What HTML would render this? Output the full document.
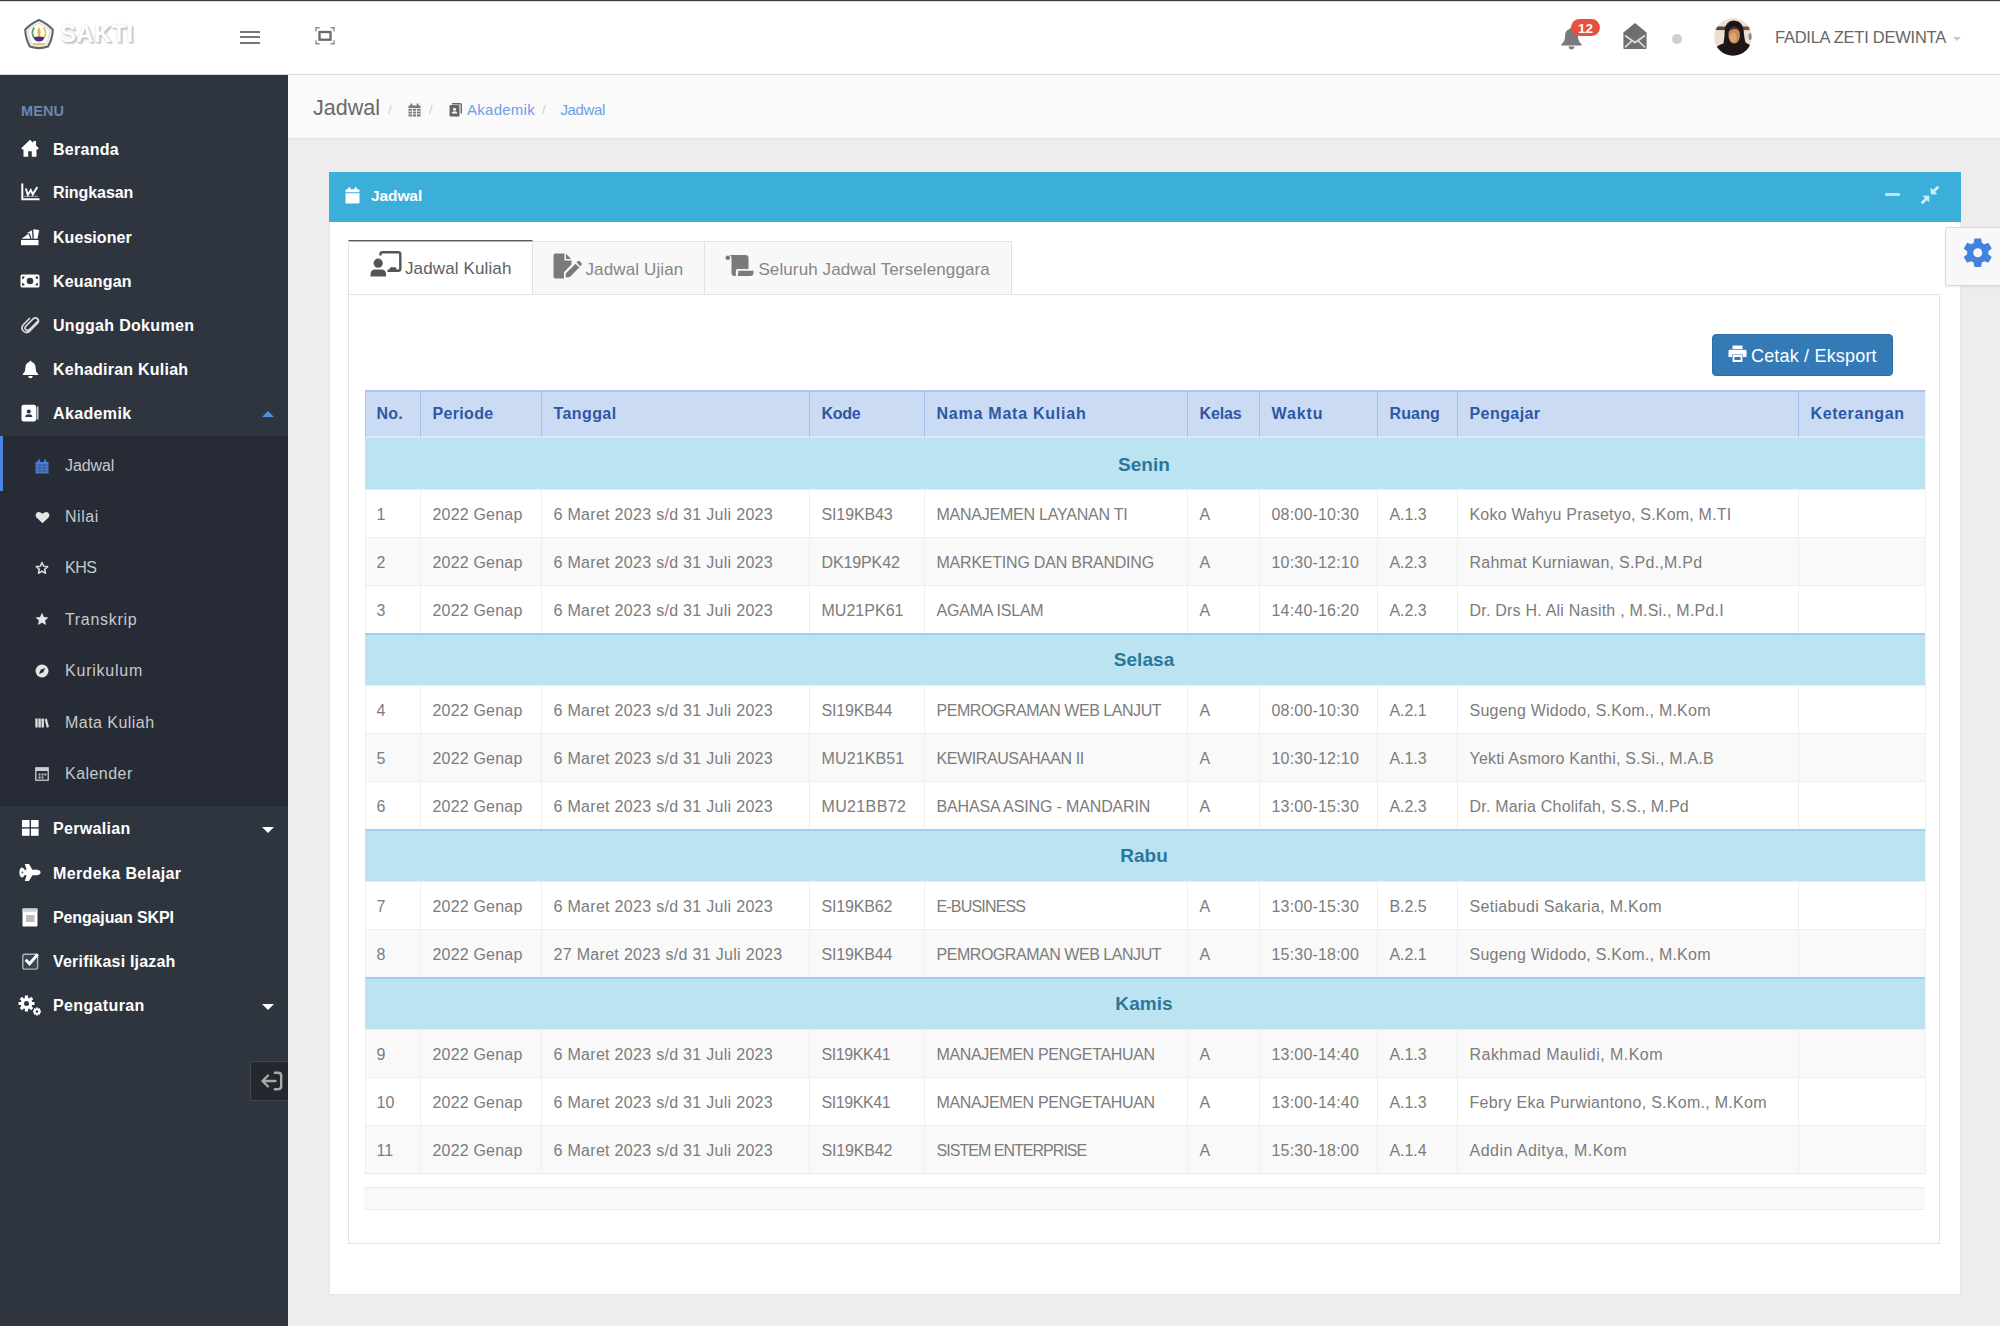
<!DOCTYPE html>
<html lang="id">
<head>
<meta charset="utf-8">
<title>Jadwal</title>
<style>
*{box-sizing:border-box;margin:0;padding:0}
html,body{width:2000px;height:1326px;overflow:hidden}
body{font-family:"Liberation Sans",sans-serif;background:#ededed;color:#777;position:relative}
.abs{position:absolute}
#topline{left:0;top:0;width:2000px;height:2px;background:#d8d8d8;border-top:1px solid #3e3e3e}
#header{left:0;top:2px;width:2000px;height:73px;background:#fff;border-bottom:1px solid #dcdcdc}
#sidebar{left:0;top:75px;width:288px;height:1251px;background:#2f353f}
#crumb{left:288px;top:75px;width:1712px;height:64px;background:#fafafa;border-bottom:1px solid #e4e4e4}
#panel{left:329px;top:172px;width:1632px;height:1123px;background:#fff;border:1px solid #e6e6e6;border-top:none}
#phead{left:329px;top:172px;width:1632px;height:50px;background:#3bafda}
#tabbox{left:348px;top:294px;width:1592px;height:950px;background:#fff;border:1px solid #e3e3e3}
.nowrap{white-space:nowrap}
/* sidebar */
.mi{margin-top:1px;position:absolute;left:53px;color:#fff;font-weight:bold;font-size:16px;white-space:nowrap;line-height:20px;letter-spacing:.1px}
.si{margin-top:1px;position:absolute;left:65px;color:#c8c9cc;font-size:16px;white-space:nowrap;line-height:20px;letter-spacing:.2px}
#submenu{left:0;top:436px;width:288px;height:370px;background:#272b35}
/* tabs */
.tab{position:absolute;top:241px;height:54px;background:#f8f8f8;border:1px solid #e3e3e3;font-size:17px;color:#777;white-space:nowrap}
/* table */
table{border-collapse:separate;border-spacing:0;table-layout:fixed;position:absolute;left:365px;top:390px;width:1560px;font-size:16px;color:#7c7c7c;border-right:1px solid #efefef;border-bottom:1px solid #e9e9e9}
td,th{border:0;border-left:1px solid #efefef;border-top:1px solid #eeeeee;padding:3px 0 0 11.5px;text-align:left;white-space:nowrap;overflow:hidden;vertical-align:middle;line-height:20px}
th{background:#cadbf3;color:#2c58a5;font-weight:bold;font-size:16px;height:48px;border-left:1px solid #a4c1ee;border-top:2px solid #a9c5ef;border-bottom:2px solid #dde7f5;padding-top:0}
tr.g td{background:#bce3f2;color:#2a7899;font-weight:bold;font-size:19px;text-align:center;padding:0 3px 0 0;border-left:1px solid #bce3f2;border-top:2px solid #9fd1ee;letter-spacing:.05px}
tr.r td{height:48px}
tr.g1 td{border-top-color:#bce3f2}
tr.r47 td{height:47px}
tr.o td{background:#fff}
tr.e td{background:#f9f9f9}
/*COLCSS*/
.h0{letter-spacing:0.24px}
.h1{letter-spacing:0.33px}
.h2{letter-spacing:0.41px}
.h3{letter-spacing:-0.25px}
.h4{letter-spacing:0.76px}
.h5{letter-spacing:-0.14px}
.h6{letter-spacing:0.92px}
.h7{letter-spacing:0.14px}
.h8{letter-spacing:0.43px}
.h9{letter-spacing:0.60px}
.c0{letter-spacing:0.10px}
.c1{letter-spacing:0.19px}
.c2{letter-spacing:0.30px}
.c3{letter-spacing:-0.13px}
.c4{letter-spacing:-0.22px}
.c5{letter-spacing:-0.17px}
.c6{letter-spacing:0.19px}
.c7{letter-spacing:-0.07px}
.c8{letter-spacing:0.22px}
/*ENDCOLCSS*/
.h0,.c0{padding-left:10.5px}
</style>
</head>
<body>
<div id="topline" class="abs"></div>
<div id="header" class="abs"></div>
<div id="sidebar" class="abs"></div>
<div id="crumb" class="abs"></div>
<div id="panel" class="abs"></div>
<div id="phead" class="abs"></div>
<div id="tabbox" class="abs"></div>
<!--HEADER-CONTENT-->
<svg class="abs" style="left:23px;top:18px" width="32" height="32" viewBox="0 0 32 32">
<path d="M16 2 Q23.800 5.300 29.800 11.600 Q29.600 20.800 25 28.600 Q16 31.600 7 28.600 Q2.400 20.800 2.200 11.600 Q8.200 5.300 16 2Z" fill="#f3f3f3" stroke="#666" stroke-width="2.100" stroke-linejoin="round"/><path d="M16 5 Q22 7.800 26.800 12.600 Q26.500 20 23 26.200 Q16 28.400 9 26.200 Q5.500 20 5.200 12.600 Q10 7.800 16 5Z" fill="#fff" stroke="#d0d0d0" stroke-width="0.800"/>
<path d="M11.2 9.5 Q7.6 14.5 11.2 20" fill="none" stroke="#5aa36a" stroke-width="1.8"/>
<path d="M20.8 9.5 Q24.4 14.5 20.8 20" fill="none" stroke="#d9c25a" stroke-width="1.6"/>
<path d="M16 8.5 Q19.2 14.5 16 20.5 Q12.8 14.5 16 8.5Z" fill="#f0b92c"/>
<path d="M10.6 19.2 Q16 17.6 21.4 19.2 Q20.6 23.4 16 23.4 Q11.4 23.4 10.6 19.2Z" fill="#4a2d86"/>
<path d="M9.6 25.2 L22.4 25.2 L21.6 26.8 L10.4 26.8Z" fill="#e3b93a"/>
</svg>
<div class="abs nowrap" id="brand" style="left:60px;top:19px;font-size:24px;line-height:30px;font-weight:bold;color:#fff;letter-spacing:.3px;text-shadow:1px 1px 1px #bdbdbd,2px 2px 2px #cfcfcf,0 0 2px #d8d8d8">SAKTI</div>
<div class="abs" style="left:240px;top:31px;width:20px;height:2px;background:#757575"></div>
<div class="abs" style="left:240px;top:36px;width:20px;height:2px;background:#757575"></div>
<div class="abs" style="left:240px;top:41.500px;width:20px;height:2px;background:#757575"></div>
<svg class="abs" style="left:315px;top:27px" width="20" height="18" viewBox="0 0 20 18">
<rect x="4.500" y="5" width="11" height="7.700" fill="none" stroke="#6a6a6a" stroke-width="2.300"/>
<path d="M1 4.300V0.800H4.500 M15.500 0.800H19V4.300 M19 13.200V16.800H15.500 M4.500 16.800H1V13.200" fill="none" stroke="#8a8a8a" stroke-width="1.400"/>
</svg>
<svg class="abs" style="left:1560px;top:26px" width="23" height="24" viewBox="0 0 23 24">
<path d="M11.5 1.2 Q12.9 1.2 12.9 2.8 Q18 4 18 10.2 Q18 15.6 21.6 18.2 L21.6 19.4 L1.4 19.4 L1.4 18.2 Q5 15.6 5 10.2 Q5 4 10.1 2.8 Q10.1 1.2 11.5 1.2Z" fill="#7a7a7a"/>
<path d="M8.6 20.6 L14.4 20.6 Q14.2 23.4 11.5 23.4 Q8.8 23.4 8.6 20.6Z" fill="#7a7a7a"/>
</svg>
<div class="abs nowrap" style="left:1571px;top:19px;width:29px;height:17px;border-radius:9px;background:#e9503e;color:#fff;font-weight:bold;font-size:13.500px;line-height:20px;text-align:center;overflow:hidden">12</div>
<svg class="abs" style="left:1622px;top:22px" width="26" height="28" viewBox="0 0 26 28">
<path d="M13 1 L24.6 10.6 L24.6 26 Q24.6 27 23.6 27 L2.4 27 Q1.4 27 1.4 26 L1.4 10.6Z" fill="#6e6e6e"/>
<path d="M3 13.4 L13 20.6 L23 13.4 M3 25.4 L10 18.6 M23 25.4 L16 18.6" fill="none" stroke="#d8d8d8" stroke-width="1.800"/>
</svg>
<div class="abs" style="left:1672px;top:34px;width:10px;height:10px;border-radius:5px;background:#cfcfcf"></div>
<svg class="abs" style="left:1714px;top:18px" width="38" height="38" viewBox="0 0 38 38">
<defs><clipPath id="avc"><circle cx="19" cy="19" r="18.800"/></clipPath><filter id="avb" x="-10%" y="-10%" width="120%" height="120%"><feGaussianBlur stdDeviation="0.700"/></filter></defs>
<g clip-path="url(#avc)"><g filter="url(#avb)">
<rect x="-3" y="-3" width="44" height="44" fill="#ecdfd1"/>
<rect x="0" y="8.500" width="12" height="3.600" fill="#5a4639"/>
<rect x="28" y="8.500" width="7.500" height="3.600" fill="#6a5546"/>
<ellipse cx="36.200" cy="18.500" rx="1.600" ry="3.600" fill="#8a8583"/>
<path d="M19.800 2.500 Q28.600 3 29.600 12 Q30.200 20 31.500 24.500 Q36 26.500 38 29 L38 40 L0 40 L0 31 Q3 27.500 9.500 25.500 Q10.600 20 10.800 12 Q11.500 3 19.800 2.500Z" fill="#1d1513"/>
<ellipse cx="20.200" cy="17.200" rx="5.800" ry="8.400" fill="#c48a5c"/>
<ellipse cx="19.200" cy="19.500" rx="3.400" ry="5" fill="#dba56e"/>
<path d="M14 13.500 Q17 7.500 22.500 8.500 Q26 10 26.200 14 Q24 10.500 20 11 Q16 11.500 14 13.500Z" fill="#3a2418" opacity=".85"/>
</g></g>
</svg>
<div class="abs nowrap" id="uname" style="left:1775px;top:26px;font-size:16.500px;line-height:22px;color:#666;letter-spacing:-.25px">FADILA ZETI DEWINTA</div>
<div class="abs" style="left:1953px;top:37px;width:0;height:0;border-left:4px solid transparent;border-right:4px solid transparent;border-top:4px solid #c8c8c8"></div>

<!--SIDEBAR-CONTENT-->
<div id="submenu" class="abs"></div>
<div class="abs" style="left:0;top:436px;width:3px;height:55px;background:#4a86e0"></div>
<div class="abs nowrap" id="menulbl" style="left:21px;top:101px;font-size:14.500px;font-weight:bold;line-height:20px;color:#6b87af;letter-spacing:.1px">MENU</div>
<div class="mi" id="m0" style="top:139px;letter-spacing:0.28px">Beranda</div>
<div class="mi" id="m1" style="top:182px;letter-spacing:-0.07px">Ringkasan</div>
<div class="mi" id="m2" style="top:227px;letter-spacing:0.05px">Kuesioner</div>
<div class="mi" id="m3" style="top:271px;letter-spacing:0.17px">Keuangan</div>
<div class="mi" id="m4" style="top:315px;letter-spacing:0.31px">Unggah Dokumen</div>
<div class="mi" id="m5" style="top:359px;letter-spacing:0.23px">Kehadiran Kuliah</div>
<div class="mi" id="m6" style="top:403px;letter-spacing:0.36px">Akademik</div>
<div class="mi" id="m7" style="top:818px;letter-spacing:0.33px">Perwalian</div>
<div class="mi" id="m8" style="top:863px;letter-spacing:0.38px">Merdeka Belajar</div>
<div class="mi" id="m9" style="top:907px;letter-spacing:-0.13px">Pengajuan SKPI</div>
<div class="mi" id="m10" style="top:951px;letter-spacing:0.20px">Verifikasi Ijazah</div>
<div class="mi" id="m11" style="top:995px;letter-spacing:0.37px">Pengaturan</div>
<div class="si" id="s0" style="top:455px;letter-spacing:-0.09px">Jadwal</div>
<div class="si" id="s1" style="top:506px;letter-spacing:0.53px">Nilai</div>
<div class="si" id="s2" style="top:557px;letter-spacing:-0.54px">KHS</div>
<div class="si" id="s3" style="top:609px;letter-spacing:0.68px">Transkrip</div>
<div class="si" id="s4" style="top:660px;letter-spacing:0.78px">Kurikulum</div>
<div class="si" id="s5" style="top:712px;letter-spacing:0.46px">Mata Kuliah</div>
<div class="si" id="s6" style="top:763px;letter-spacing:0.46px">Kalender</div>
<svg class="abs" style="left:21px;top:139px" width="18" height="19" viewBox="0 0 18 19"><path d="M9 0.800 L12.300 3.900 V2 H15 V6.500 L17.800 9.200 L16.600 10.500 H15.500 V17.800 H10.800 V12.300 H7.200 V17.800 H2.500 V10.500 H1.400 L0.200 9.200Z" fill="#fff"/></svg>
<svg class="abs" style="left:21px;top:183px" width="19" height="18" viewBox="0 0 19 18"><path d="M1.300 0.500V16.300H18.500" fill="none" stroke="#fff" stroke-width="2"/><path d="M4.800 5.500 L6.800 12 L9.800 7 L11.800 11.500 L16.300 4" fill="none" stroke="#fff" stroke-width="1.900"/><path d="M3 13.300H17" stroke="#fff" stroke-width="1" opacity=".55"/></svg>
<svg class="abs" style="left:20px;top:228px" width="20" height="18" viewBox="0 0 20 18"><path d="M1 12H18.500V17.200H1Z" fill="#fff"/><path d="M1.500 10.800 L8.500 5.800 L10.300 10.800Z M6.500 5.200 L12 2.200 L12.500 10.800 L11.500 10.800 L9.800 5.200Z M13.300 1.200 L19.200 2 L17.500 10.800 L13.800 10.800Z" fill="#fff"/></svg>
<svg class="abs" style="left:20px;top:274px" width="20" height="14" viewBox="0 0 20 14"><rect x="0.500" y="0.500" width="19" height="13" rx="1.500" fill="#fff"/><circle cx="10" cy="7" r="3.300" fill="#2f353f"/><path d="M2 2.500 h2.500 a2.500 2.500 0 0 1 -2.500 2.500Z M18 2.500 h-2.500 a2.500 2.500 0 0 0 2.500 2.500Z M2 11.500 h2.500 a2.500 2.500 0 0 0 -2.500 -2.500Z M18 11.500 h-2.500 a2.500 2.500 0 0 1 2.500 -2.500Z" fill="#2f353f"/></svg>
<svg class="abs" style="left:20px;top:316px" width="20" height="18" viewBox="0 0 20 18"><path d="M17.500 5.500 L9.500 13.500 Q7.500 15.300 5.800 13.600 Q4.200 11.800 6 10 L13 3 Q15.500 0.800 17.600 2.900 Q19.600 5.200 17.300 7.500 L9.800 15 Q6.300 18 3.300 15 Q0.500 11.800 3.500 8.500 L9.500 2.500" fill="none" stroke="#dcdcdc" stroke-width="1.700" stroke-linecap="round"/></svg>
<svg class="abs" style="left:22px;top:360px" width="17" height="19" viewBox="0 0 17 19"><path d="M8.500 0.800 Q9.600 0.800 9.600 2 Q13.600 3 13.600 8 Q13.600 12 16.200 14 V15 H0.800 V14 Q3.400 12 3.400 8 Q3.400 3 7.400 2 Q7.400 0.800 8.500 0.800Z" fill="#fff"/><path d="M6.200 16 H10.800 Q10.600 18.300 8.500 18.300 Q6.400 18.300 6.200 16Z" fill="#fff"/></svg>
<svg class="abs" style="left:21px;top:404px" width="18" height="18" viewBox="0 0 18 18"><rect x="0.500" y="0.800" width="14.500" height="16.600" rx="2" fill="#fff"/><path d="M15.500 2.500H17.500V15.500H15.500Z" fill="#c4c7cc"/><circle cx="7.800" cy="7.600" r="2" fill="#2f353f"/><path d="M4.200 13Q4.200 10.300 7.800 10.300Q11.400 10.300 11.400 13Z" fill="#2f353f"/></svg>
<div class="abs" style="left:262px;top:411px;width:0;height:0;border-left:6px solid transparent;border-right:6px solid transparent;border-bottom:6px solid #4a90e2"></div>
<svg class="abs" style="left:35px;top:459px" width="14" height="15" viewBox="0 0 14 15"><path d="M0.500 3 H13.500 V14.500 H0.500Z" fill="#4a7fd6"/><rect x="2.800" y="0.500" width="2" height="3.500" fill="#4a7fd6"/><rect x="9.200" y="0.500" width="2" height="3.500" fill="#4a7fd6"/><path d="M0.500 6 H13.500 M0.500 9 H13.500 M0.500 12 H13.500 M4.800 6 V14.500 M9.200 6 V14.500" stroke="#272b35" stroke-width="0.800" opacity=".55"/></svg>
<svg class="abs" style="left:35px;top:511px" width="15" height="13" viewBox="0 0 15 13"><path d="M7.500 12.300 L1.500 6.500 Q-0.300 4 1.700 1.800 Q4.200 -0.200 7.500 2.800 Q10.800 -0.200 13.300 1.800 Q15.300 4 13.500 6.500Z" fill="#e4e4e4"/></svg>
<svg class="abs" style="left:35px;top:561px" width="14" height="14" viewBox="0 0 15 15"><path d="M7.500 1.600 L9.300 5.600 L13.600 6 L10.400 8.900 L11.300 13.100 L7.500 10.900 L3.700 13.100 L4.600 8.900 L1.400 6 L5.700 5.600Z" fill="none" stroke="#d8d8d8" stroke-width="1.700" stroke-linejoin="round"/></svg>
<svg class="abs" style="left:35px;top:612px" width="14" height="14" viewBox="0 0 15 15"><path d="M7.500 0.800 L9.600 5.300 L14.500 5.800 L10.800 9.100 L11.900 14 L7.500 11.500 L3.100 14 L4.200 9.100 L0.500 5.800 L5.400 5.300Z" fill="#e4e4e4"/></svg>
<svg class="abs" style="left:35px;top:664px" width="14" height="14" viewBox="0 0 14 14"><circle cx="7" cy="7" r="6.500" fill="#e4e4e4"/><path d="M10 4 L8.300 8.300 L4 10 L5.700 5.700Z" fill="#272b35"/></svg>
<svg class="abs" style="left:35px;top:718px" width="14" height="10" viewBox="0 0 14 10"><rect x="0.300" y="0.500" width="2.400" height="9" fill="#dcdcdc"/><rect x="3.400" y="0.500" width="2.400" height="9" fill="#dcdcdc"/><rect x="6.500" y="0.500" width="2.400" height="9" fill="#dcdcdc"/><path d="M9.600 1.300 L11.800 0.600 L14 9 L11.800 9.700Z" fill="#dcdcdc"/></svg>
<svg class="abs" style="left:35px;top:767px" width="14" height="14" viewBox="0 0 14 14"><rect x="0.800" y="0.800" width="12.400" height="12.400" fill="none" stroke="#cfcfcf" stroke-width="1.300"/><rect x="0.800" y="0.800" width="12.400" height="3.200" fill="#cfcfcf"/><path d="M3.500 6.500h2v2h-2z M6.500 6.500h2v2h-2z M9.300 6.500h2v2h-2z M3.500 9.500h2v2h-2z M6.500 9.500h2v2h-2z" fill="#bdbdbd"/></svg>
<svg class="abs" style="left:22px;top:820px" width="17" height="16" viewBox="0 0 17 16"><rect x="0" y="0" width="7.600" height="7.200" fill="#fff"/><rect x="9" y="0" width="7.600" height="7.200" fill="#fff"/><rect x="0" y="8.600" width="7.600" height="7.200" fill="#fff"/><rect x="9" y="8.600" width="7.600" height="7.200" fill="#fff"/></svg>
<svg class="abs" style="left:19px;top:863px" width="22" height="19" viewBox="0 0 22 19"><path d="M5.800 0.900H10L13.400 6.800H18Q21.600 7.300 21.600 9.500Q21.600 11.700 18 12.200H13.400L10 18.100H5.800L7.600 12.200H5.400Q4.600 14.400 2.700 14.400Q0.400 13.600 0.400 9.500Q0.400 5.400 2.700 4.600Q4.600 4.600 5.400 6.800H7.600Z" fill="#fff"/><circle cx="3.400" cy="9.500" r="1.100" fill="#6a707a"/></svg>
<svg class="abs" style="left:22px;top:908px" width="16" height="19" viewBox="0 0 16 19"><rect x="0.500" y="0.500" width="15" height="18" rx="1" fill="#fff"/><rect x="0.500" y="0.500" width="15" height="3.300" fill="#cfd2d6"/><rect x="4" y="7" width="8.500" height="7" fill="#b9bcc2"/></svg>
<svg class="abs" style="left:22px;top:952px" width="18" height="18" viewBox="0 0 18 18"><rect x="0.800" y="2.300" width="14.800" height="14.800" rx="1.500" fill="#3d434e" stroke="#aeb3ba" stroke-width="1.400"/><path d="M3.800 7.800 L7.500 11.800 L15.800 2.200" fill="none" stroke="#fff" stroke-width="2.900"/></svg>
<svg class="abs" style="left:18px;top:995px" width="24" height="21" viewBox="0 0 24 21"><g fill="#fff"><circle cx="8.500" cy="8.500" r="5.800"/><g stroke="#fff" stroke-width="3.200"><path d="M8.500 0.500V16.500M0.500 8.500H16.500M2.800 2.800L14.200 14.200M14.200 2.800L2.800 14.200"/></g><circle cx="19" cy="16.500" r="3"/><g stroke="#fff" stroke-width="1.800"><path d="M19 12.500V20.500M15 16.500H23M16.200 13.700L21.800 19.300M21.800 13.700L16.200 19.300"/></g></g><circle cx="8.500" cy="8.500" r="2.500" fill="#2f353f"/><circle cx="19" cy="16.500" r="1.200" fill="#2f353f"/></svg>
<div class="abs" style="left:262px;top:827px;width:0;height:0;border-left:6px solid transparent;border-right:6px solid transparent;border-top:6px solid #fff"></div>
<div class="abs" style="left:262px;top:1004px;width:0;height:0;border-left:6px solid transparent;border-right:6px solid transparent;border-top:6px solid #fff"></div>
<div class="abs" style="left:250px;top:1061px;width:38px;height:40px;background:#25272e;border:1px solid #42464d;border-right:none;border-radius:2px 0 0 2px"></div>
<svg class="abs" style="left:260px;top:1070px" width="23" height="22" viewBox="0 0 23 22"><g fill="none" stroke="#a9a9a9" stroke-width="2.400" stroke-linecap="round" stroke-linejoin="round"><path d="M14.800 2.800H18Q21.200 2.800 21.200 6V16Q21.200 19.200 18 19.200H14.800"/><path d="M15.500 11H3M8 5.500L2.500 11L8 16.500"/></g></svg>
<!--CRUMB-CONTENT-->
<div class="abs nowrap" id="ptitle" style="left:313px;top:94px;font-size:21.500px;line-height:28px;color:#696969;letter-spacing:0">Jadwal</div>
<div class="abs nowrap" style="left:388px;top:101px;font-size:13px;line-height:18px;color:#cdcdcd">/</div>
<svg class="abs" style="left:408px;top:103px" width="13" height="14" viewBox="0 0 13 14"><path d="M0.500 2.500H12.500V13.500H0.500Z" fill="#7a7a7a"/><rect x="2.500" y="0.500" width="1.800" height="3" fill="#7a7a7a"/><rect x="8.700" y="0.500" width="1.800" height="3" fill="#7a7a7a"/><path d="M0.500 5.500H12.500M0.500 8.200H12.500M0.500 10.900H12.500M4.500 5.500V13.500M8.500 5.500V13.500" stroke="#fafafa" stroke-width="0.900"/></svg>
<div class="abs nowrap" style="left:429px;top:101px;font-size:13px;line-height:18px;color:#cdcdcd">/</div>
<svg class="abs" style="left:449px;top:103px" width="13" height="14" viewBox="0 0 13 14"><rect x="0.500" y="2" width="10" height="11.500" rx="1" fill="#666"/><path d="M3 0.800H11.300Q12.300 0.800 12.300 1.800V10.500" fill="none" stroke="#666" stroke-width="1.400"/><circle cx="5.500" cy="6.300" r="1.500" fill="#fafafa"/><path d="M2.800 10.500Q2.800 8.300 5.500 8.300Q8.200 8.300 8.200 10.500Z" fill="#fafafa"/></svg>
<div class="abs nowrap" id="bc1" style="left:467px;top:101px;font-size:15px;line-height:18px;color:#6c9ee9;letter-spacing:.26px">Akademik</div>
<div class="abs nowrap" style="left:542px;top:101px;font-size:13px;line-height:18px;color:#cdcdcd">/</div>
<div class="abs nowrap" id="bc2" style="left:560.400px;top:101px;font-size:15px;line-height:18px;color:#6c9ee9;letter-spacing:-.34px">Jadwal</div>

<!--PANEL-CONTENT-->
<svg class="abs" style="left:345px;top:187px" width="15" height="17" viewBox="0 0 15 17"><path d="M0.500 6.200H14.500V15.200Q14.500 16.500 13.200 16.500H1.800Q0.500 16.500 0.500 15.200Z" fill="#fff"/><path d="M1.800 2.300H13.200Q14.500 2.300 14.500 3.600V5.200H0.500V3.600Q0.500 2.300 1.800 2.300Z" fill="#fff"/><rect x="3.200" y="0.300" width="2.200" height="3.600" rx=".6" fill="#fff"/><rect x="9.600" y="0.300" width="2.200" height="3.600" rx=".6" fill="#fff"/></svg>
<div class="abs nowrap" id="ph" style="left:371px;top:185px;font-size:15.500px;line-height:22px;font-weight:bold;color:#fff;letter-spacing:-.1px">Jadwal</div>
<div class="abs" style="left:1885px;top:193px;width:15px;height:3px;background:#c2e5f4;border-radius:1px"></div>
<svg class="abs" style="left:1920px;top:185px" width="20" height="20" viewBox="0 0 20 20"><g fill="#d4edf7" stroke="#d4edf7"><path d="M18.300 1.700L14 6" stroke-width="2.800" fill="none"/><path d="M11.100 3.300L16.700 8.900H11.100Z" stroke-width="0.800" stroke-linejoin="round"/><path d="M1.700 18.300L6 14" stroke-width="2.800" fill="none"/><path d="M8.900 16.700L3.300 11.100H8.900Z" stroke-width="0.800" stroke-linejoin="round"/></g></svg>
<!-- settings tab -->
<div class="abs" style="left:1945px;top:227px;width:60px;height:59px;background:#f8f8f8;border:1px solid #dadada;border-radius:2px;box-shadow:0 1px 2px rgba(0,0,0,.08)"></div>
<svg class="abs" style="left:1959.700px;top:235px" width="35.500" height="35.500" viewBox="0 0 24 24"><path fill="#4582dd" d="M19.140 12.940c.040-.300.060-.610.060-.940 0-.320-.020-.640-.070-.940l2.030-1.580a.490.490 0 0 0 .120-.610l-1.920-3.320a.488.488 0 0 0-.590-.220l-2.390.960c-.500-.380-1.030-.700-1.620-.940l-.360-2.540a.484.484 0 0 0-.480-.410h-3.840c-.240 0-.430.170-.470.410l-.360 2.540c-.590.240-1.130.570-1.620.940l-2.390-.960c-.220-.080-.470 0-.590.220L2.740 8.870c-.120.210-.080.470.120.610l2.030 1.580c-.050.300-.090.630-.090.940s.020.640.070.940l-2.030 1.580a.490.490 0 0 0-.120.610l1.920 3.320c.120.220.370.290.590.220l2.390-.960c.500.380 1.030.700 1.620.940l.360 2.540c.050.240.240.410.480.410h3.840c.240 0 .440-.170.470-.410l.360-2.540c.590-.240 1.130-.560 1.620-.940l2.390.960c.220.080.470 0 .590-.220l1.920-3.320c.120-.220.070-.470-.120-.610l-2.010-1.580zM12 15.600c-1.980 0-3.600-1.620-3.600-3.600s1.620-3.600 3.600-3.600 3.600 1.620 3.600 3.600-1.620 3.600-3.600 3.600z"/><circle cx="12" cy="12" r="3.600" fill="none" stroke="#4582dd" stroke-width="1.100"/></svg>
<!-- tabs -->
<div class="tab" style="left:348px;width:185px;background:#fff;border-top:1px solid #5c5c5c;top:240px;height:55px;box-shadow:inset 0 1px 0 #b5b5b5"></div>
<div class="tab" style="left:532px;width:173px"></div>
<div class="tab" style="left:704px;width:308px"></div>
<div class="abs nowrap" id="t1" style="left:405px;top:258px;font-size:17px;line-height:22px;color:#5e5e5e;letter-spacing:.12px">Jadwal Kuliah</div>
<div class="abs nowrap" id="t2" style="left:585.500px;top:259px;font-size:17px;line-height:22px;color:#868686;letter-spacing:.12px">Jadwal Ujian</div>
<div class="abs nowrap" id="t3" style="left:758.400px;top:259px;font-size:17px;line-height:22px;color:#868686;letter-spacing:.11px">Seluruh Jadwal Terselenggara</div>
<svg class="abs" style="left:370px;top:251px" width="32" height="26" viewBox="0 0 32 26">
<path d="M10.500 4.500V3.200Q10.500 1.200 12.500 1.200H28.300Q30.300 1.200 30.300 3.200V17.800Q30.300 19.800 28.300 19.800H17.500" fill="none" stroke="#555" stroke-width="2.400"/>
<path d="M19.500 19.800V17.800Q19.500 16.200 21.200 16.200H24.800Q26.500 16.200 26.500 17.800V19.800Z" fill="#555"/>
<circle cx="8.200" cy="12.200" r="4.600" fill="#555"/>
<path d="M0.500 25.500V23.500Q0.500 18.600 5.200 18.600H11.200Q16 18.600 16 23.500V25.500Z" fill="#555"/>
</svg>
<svg class="abs" style="left:553px;top:253px" width="29" height="26" viewBox="0 0 29 26">
<path d="M2.500 0.500H11.500V7.500H18.500V11.500L11 19V25.500H2.500Q0.500 25.500 0.500 23.500V2.500Q0.500 0.500 2.500 0.500Z" fill="#7a7a7a"/>
<path d="M13 0.800L18.200 6H13Z" fill="#7a7a7a"/>
<path d="M13 20.200L22.500 10.700L26.300 14.500L16.800 24L12.600 24.600Z" fill="#7a7a7a"/>
<path d="M23.600 9.600L25 8.200Q25.800 7.500 26.600 8.200L28.600 10.200Q29.300 11 28.600 11.800L27.200 13.200Z" fill="#7a7a7a"/>
</svg>
<svg class="abs" style="left:725px;top:254px" width="29" height="23" viewBox="0 0 29 23">
<circle cx="2.800" cy="3.800" r="2.300" fill="#7a7a7a"/>
<path d="M4.500 1H20.500Q23.500 1 23.500 4V15H12.500Q10.800 15 10.800 17V22H10Q6.500 22 6.500 18.500V4Q6.500 1.800 4.500 1Z" fill="#7a7a7a"/>
<path d="M13.200 16.800H28.500V18.500Q28.500 22 25 22H12.500Q13.200 21 13.200 19.500Z" fill="#7a7a7a"/>
</svg>

<!-- button -->
<div class="abs" style="left:1712px;top:334px;width:181px;height:42px;background:#337ab7;border:1px solid #2e6da4;border-radius:4px"></div>
<svg class="abs" style="left:1728px;top:345px" width="19" height="17" viewBox="0 0 19 17"><path d="M4.500 0.500H14.500V4H4.500Z" fill="#fff"/><path d="M1.800 4.800H17.200Q18.500 4.800 18.500 6.100V12H15V9.500H4V12H0.500V6.100Q0.500 4.800 1.800 4.800Z" fill="#fff"/><path d="M5.500 11H13.500V16H5.500Z" fill="none" stroke="#fff" stroke-width="1.800"/></svg>
<div class="abs nowrap" id="btn" style="left:1751px;top:344px;font-size:18px;line-height:24px;color:#fff;letter-spacing:.18px">Cetak / Eksport</div>
<!-- footer bar -->
<div class="abs" style="left:364px;top:1187px;width:1561px;height:23px;background:#f9f9f9;border-top:1px solid #ececec;border-bottom:1px solid #ececec"></div>

<!--TABLE-START-->
<table id="tbl"><colgroup>
<col style="width:55px">
<col style="width:121px">
<col style="width:268px">
<col style="width:115px">
<col style="width:263px">
<col style="width:72px">
<col style="width:118px">
<col style="width:80px">
<col style="width:341px">
<col style="width:127px">
</colgroup>
<tr><th class="h0">No.</th><th class="h1">Periode</th><th class="h2">Tanggal</th><th class="h3">Kode</th><th class="h4">Nama Mata Kuliah</th><th class="h5">Kelas</th><th class="h6">Waktu</th><th class="h7">Ruang</th><th class="h8">Pengajar</th><th class="h9">Keterangan</th></tr>
<tr class="g g1"><td colspan="10" style="height:51px">Senin</td></tr>
<tr class="r o" id="r1"><td class="c0">1</td><td class="c1">2022 Genap</td><td class="c2" style="letter-spacing:0.30px">6 Maret 2023 s/d 31 Juli 2023</td><td class="c3" style="letter-spacing:-0.13px">SI19KB43</td><td class="c4" style="letter-spacing:-0.23px">MANAJEMEN LAYANAN TI</td><td class="c5">A</td><td class="c6">08:00-10:30</td><td class="c7">A.1.3</td><td class="c8" style="letter-spacing:0.20px">Koko Wahyu Prasetyo, S.Kom, M.TI</td><td class="c9"></td></tr>
<tr class="r e" id="r2"><td class="c0">2</td><td class="c1">2022 Genap</td><td class="c2" style="letter-spacing:0.30px">6 Maret 2023 s/d 31 Juli 2023</td><td class="c3" style="letter-spacing:-0.12px">DK19PK42</td><td class="c4" style="letter-spacing:-0.22px">MARKETING DAN BRANDING</td><td class="c5">A</td><td class="c6">10:30-12:10</td><td class="c7">A.2.3</td><td class="c8" style="letter-spacing:0.25px">Rahmat Kurniawan, S.Pd.,M.Pd</td><td class="c9"></td></tr>
<tr class="r o" id="r3"><td class="c0">3</td><td class="c1">2022 Genap</td><td class="c2" style="letter-spacing:0.30px">6 Maret 2023 s/d 31 Juli 2023</td><td class="c3" style="letter-spacing:0.02px">MU21PK61</td><td class="c4" style="letter-spacing:-0.22px">AGAMA ISLAM</td><td class="c5">A</td><td class="c6">14:40-16:20</td><td class="c7">A.2.3</td><td class="c8" style="letter-spacing:0.22px">Dr. Drs H. Ali Nasith , M.Si., M.Pd.I</td><td class="c9"></td></tr>
<tr class="g"><td colspan="10" style="height:52px">Selasa</td></tr>
<tr class="r o" id="r4"><td class="c0">4</td><td class="c1">2022 Genap</td><td class="c2" style="letter-spacing:0.30px">6 Maret 2023 s/d 31 Juli 2023</td><td class="c3" style="letter-spacing:-0.17px">SI19KB44</td><td class="c4" style="letter-spacing:-0.46px">PEMROGRAMAN WEB LANJUT</td><td class="c5">A</td><td class="c6">08:00-10:30</td><td class="c7">A.2.1</td><td class="c8" style="letter-spacing:0.23px">Sugeng Widodo, S.Kom., M.Kom</td><td class="c9"></td></tr>
<tr class="r e" id="r5"><td class="c0">5</td><td class="c1">2022 Genap</td><td class="c2" style="letter-spacing:0.30px">6 Maret 2023 s/d 31 Juli 2023</td><td class="c3" style="letter-spacing:0.13px">MU21KB51</td><td class="c4" style="letter-spacing:-0.40px">KEWIRAUSAHAAN II</td><td class="c5">A</td><td class="c6">10:30-12:10</td><td class="c7">A.1.3</td><td class="c8" style="letter-spacing:0.20px">Yekti Asmoro Kanthi, S.Si., M.A.B</td><td class="c9"></td></tr>
<tr class="r o" id="r6"><td class="c0">6</td><td class="c1">2022 Genap</td><td class="c2" style="letter-spacing:0.30px">6 Maret 2023 s/d 31 Juli 2023</td><td class="c3" style="letter-spacing:0.36px">MU21BB72</td><td class="c4" style="letter-spacing:-0.14px">BAHASA ASING - MANDARIN</td><td class="c5">A</td><td class="c6">13:00-15:30</td><td class="c7">A.2.3</td><td class="c8" style="letter-spacing:0.20px">Dr. Maria Cholifah, S.S., M.Pd</td><td class="c9"></td></tr>
<tr class="g"><td colspan="10" style="height:52px">Rabu</td></tr>
<tr class="r o" id="r7"><td class="c0">7</td><td class="c1">2022 Genap</td><td class="c2" style="letter-spacing:0.30px">6 Maret 2023 s/d 31 Juli 2023</td><td class="c3" style="letter-spacing:-0.17px">SI19KB62</td><td class="c4" style="letter-spacing:-0.82px">E-BUSINESS</td><td class="c5">A</td><td class="c6">13:00-15:30</td><td class="c7">B.2.5</td><td class="c8" style="letter-spacing:0.31px">Setiabudi Sakaria, M.Kom</td><td class="c9"></td></tr>
<tr class="r e" id="r8"><td class="c0">8</td><td class="c1">2022 Genap</td><td class="c2" style="letter-spacing:0.31px">27 Maret 2023 s/d 31 Juli 2023</td><td class="c3" style="letter-spacing:-0.17px">SI19KB44</td><td class="c4" style="letter-spacing:-0.46px">PEMROGRAMAN WEB LANJUT</td><td class="c5">A</td><td class="c6">15:30-18:00</td><td class="c7">A.2.1</td><td class="c8" style="letter-spacing:0.23px">Sugeng Widodo, S.Kom., M.Kom</td><td class="c9"></td></tr>
<tr class="g"><td colspan="10" style="height:52px">Kamis</td></tr>
<tr class="r e" id="r9"><td class="c0">9</td><td class="c1">2022 Genap</td><td class="c2" style="letter-spacing:0.30px">6 Maret 2023 s/d 31 Juli 2023</td><td class="c3" style="letter-spacing:-0.41px">SI19KK41</td><td class="c4" style="letter-spacing:-0.35px">MANAJEMEN PENGETAHUAN</td><td class="c5">A</td><td class="c6">13:00-14:40</td><td class="c7">A.1.3</td><td class="c8" style="letter-spacing:0.47px">Rakhmad Maulidi, M.Kom</td><td class="c9"></td></tr>
<tr class="r o" id="r10"><td class="c0">10</td><td class="c1">2022 Genap</td><td class="c2" style="letter-spacing:0.30px">6 Maret 2023 s/d 31 Juli 2023</td><td class="c3" style="letter-spacing:-0.41px">SI19KK41</td><td class="c4" style="letter-spacing:-0.35px">MANAJEMEN PENGETAHUAN</td><td class="c5">A</td><td class="c6">13:00-14:40</td><td class="c7">A.1.3</td><td class="c8" style="letter-spacing:0.28px">Febry Eka Purwiantono, S.Kom., M.Kom</td><td class="c9"></td></tr>
<tr class="r e" id="r11"><td class="c0">11</td><td class="c1">2022 Genap</td><td class="c2" style="letter-spacing:0.30px">6 Maret 2023 s/d 31 Juli 2023</td><td class="c3" style="letter-spacing:-0.17px">SI19KB42</td><td class="c4" style="letter-spacing:-0.97px">SISTEM ENTERPRISE</td><td class="c5">A</td><td class="c6">15:30-18:00</td><td class="c7">A.1.4</td><td class="c8" style="letter-spacing:0.47px">Addin Aditya, M.Kom</td><td class="c9"></td></tr>
</table>
<!--TABLE-END-->
</body>
</html>
